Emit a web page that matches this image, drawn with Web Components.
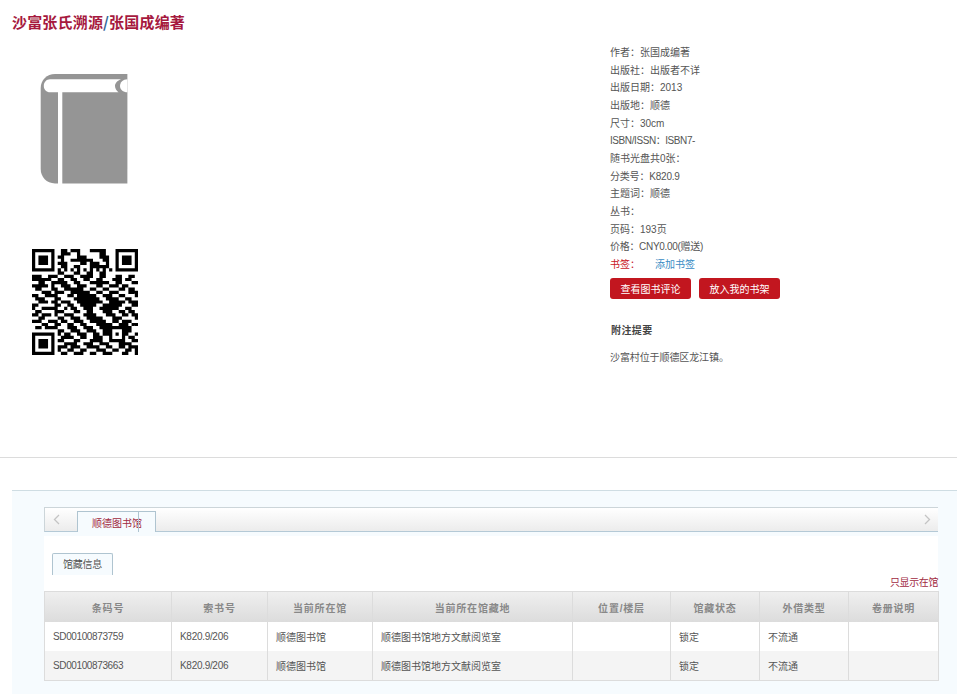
<!DOCTYPE html>
<html lang="zh">
<head>
<meta charset="utf-8">
<title>沙富张氏溯源</title>
<style>
html, body { margin: 0; padding: 0; background: #fff; overflow: hidden; }
body { font: 10px "Liberation Sans", "Noto Sans CJK SC", sans-serif; color: #555; }
</style>
</head>
<body>
<book-page>
  <book-title slot="title" name="沙富张氏溯源" author="张国成编著"></book-title>
  <book-cover slot="left"></book-cover>
  <qr-code slot="left"></qr-code>
  <book-meta slot="right"></book-meta>
  <holdings-panel slot="bottom"></holdings-panel>
</book-page>

<script>
// ---------------- page frame ----------------
class BookPage extends HTMLElement {
  constructor() {
    super();
    this.attachShadow({ mode: "open" });
    this.shadowRoot.innerHTML = `
    <style>
      :host { display: block; width: 957px; height: 694px; overflow: hidden; }
      .top { height: 457px; border-bottom: 1px solid #dcdcdc; box-sizing: content-box; }
      .cols { display: flex; }
      .left { width: 610px; flex: none; }
      .right { flex: 1; }
      .bottom { padding: 32px 0 0 12px; }
    </style>
    <div class="top">
      <slot name="title"></slot>
      <div class="cols">
        <div class="left"><slot name="left"></slot></div>
        <div class="right"><slot name="right"></slot></div>
      </div>
    </div>
    <div class="bottom"><slot name="bottom"></slot></div>`;
  }
}

class BookTitle extends HTMLElement {
  constructor() {
    super();
    this.attachShadow({ mode: "open" });
    this.shadowRoot.innerHTML = `
    <style>
      :host { display: block; height: 43px; padding: 13px 0 0 12px; box-sizing: border-box;
        font: bold 15px/18px "Noto Sans CJK SC", sans-serif; color: #a6193e; letter-spacing: .18px; }
      span { color: #336699; }
    </style>
    ${this.getAttribute("name")}<span>/</span>${this.getAttribute("author")}`;
  }
}

class BookCover extends HTMLElement {
  constructor() {
    super();
    this.attachShadow({ mode: "open" });
    this.shadowRoot.innerHTML = `
    <style>
      :host { display: block; height: 206px; padding: 31px 0 0 40px; box-sizing: border-box; }
      svg { display: block; }
    </style>
    <svg width="88" height="110" viewBox="0 0 88 110">
      <path fill="#959595" d="M15 0H87.4V109.4H15C6.5 109.4 .7 103 .7 95V14C.7 6 7 0 15 0Z"/>
      <path fill="#fff" d="M10 5.3H81C76.500 7 75 10 75 12C75 14.500 76.500 17 78.500 18.300H10C6.500 18.300 3.800 15.500 3.800 12C3.800 8.200 6.500 5.300 10 5.300Z"/>
      <path fill="#fff" d="M87.400 5.300C83 5.300 80 8.500 80 12C80 15.500 83 18.300 87.400 18.300Z"/>
      <path fill="#fff" d="M18 18H22.300V110H18Z"/>
    </svg>`;
  }
}

// ---------------- qr code ----------------
const qrRows = [
  "1111111001101110001111100001111111",
  "1000001001110010000001100001000001",
  "1011101011000011100001110001011101",
  "1011101001001111111000110001011101",
  "1011101011100001101110010001011101",
  "1000001001100110001111110001000001",
  "1111111010101010101010101001111111",
  "0000000011000110011001100000000000",
  "111001110011100111100110001100110",
  "111111001100110011001100011101100",
  "001100111110011000111111001100011",
  "111110100111001110001100111011000",
  "011000110011111100110011000110110",
  "000111011100111111001100111000111",
  "110011110001101111110011100110001",
  "011100011000011111111001111001100",
  "001110110111001111111100111110111",
  "110000011001100111110011111100011",
  "100111110010110011100111111001100",
  "011000011100011001100011100110110",
  "110111010011100011110001110011011",
  "001100001100111001111100011100001",
  "111001110110011100111110011011100",
  "000110011001100110001111100111011",
  "011011110001110011100111111111100",
  "000000001100111001110011100011100",
  "111111101011001110011011101011001",
  "100000100111100110011100100010110",
  "101110101100011000111100111110011",
  "101110100011110011100111000111100",
  "101110101110111001111001100110111",
  "100000101001100110001110011001101",
  "111111100110011100110011100011001"
];

class QrCode extends HTMLElement {
  constructor() {
    super();
    this.attachShadow({ mode: "open" });
    let d = "";
    qrRows.forEach((row, y) => {
      // top rows have a spare column in the middle, keep the right finder at the edge
      const cells = row.length > 33 ? row.slice(0, 26) + row.slice(27) : row;
      [...cells].forEach((cell, x) => {
        if (cell === "1") d += `M${x} ${y}h1v1h-1z`;
      });
    });
    this.shadowRoot.innerHTML = `
    <style>
      :host { display: block; padding-left: 32px; }
      svg { display: block; }
    </style>
    <svg width="106" height="106" viewBox="0 0 33 33"><path fill="#000" d="${d}"/></svg>`;
  }
}

// ---------------- right column ----------------
const metaLines = [
  ["作者：张国成编著"], ["出版社：出版者不详"], ["出版日期：2013"], ["出版地：顺德"], ["尺寸：30cm"],
  ["ISBN/ISSN：ISBN7-", -.42], ["随书光盘共0张："], ["分类号：K820.9", -.2], ["主题词：顺德"], ["丛书："],
  ["页码：193页"], ["价格：CNY0.00(赠送)", -.3]
];

class BookMeta extends HTMLElement {
  constructor() {
    super();
    this.attachShadow({ mode: "open" });
    this.shadowRoot.innerHTML = `
    <style>
      :host { display: block; padding-top: 1px; font: 10px/17.65px "Liberation Sans", "Noto Sans CJK SC", sans-serif; color: #555; }
      .tag { color: #c8171f; }
      .tag a { color: #3a8cc4; margin-left: 15px; text-decoration: none; }
      .btns { display: flex; gap: 8px; margin-top: 4px; }
      button-red { flex: none; }
      h4 { margin: 24px 0 0; font: bold 10px/14px "Noto Sans CJK SC", sans-serif; color: #444; letter-spacing: .4px; padding-left: 1px; }
      p { margin: 14px 0 0; line-height: 14px; letter-spacing: -.1px; }
    </style>
    ${metaLines.map(l => `<div style="letter-spacing:${l[1] || 0}px">${l[0]}</div>`).join("")}
    <div class="tag">书签：<a href="#">添加书签</a></div>
    <div class="btns"><button-red>查看图书评论</button-red><button-red>放入我的书架</button-red></div>
    <h4>附注提要</h4>
    <p>沙富村位于顺德区龙江镇。</p>`;
  }
}

class ButtonRed extends HTMLElement {
  constructor() {
    super();
    this.attachShadow({ mode: "open" });
    this.shadowRoot.innerHTML = `
    <style>
      :host { display: block; width: 81px; height: 21px; background: #c2161f; border-radius: 3px;
        color: #fff; font: 10px/21px "Noto Sans CJK SC", sans-serif; text-align: center; }
    </style>
    <slot></slot>`;
  }
}

// ---------------- holdings ----------------
class HoldingsPanel extends HTMLElement {
  constructor() {
    super();
    this.attachShadow({ mode: "open" });
    this.shadowRoot.innerHTML = `
    <style>
      :host { display: block; height: 204px; background: #f6fbfe; border-top: 1px solid #cfdde3;
        padding: 16px 0 0 32px; box-sizing: border-box; }
      .body { width: 894px; margin-top: 4px; background: #fff; padding-top: 17px; }
      .only { text-align: right; color: #a12a3f; font: 10px/16px "Noto Sans CJK SC", sans-serif; margin-top: -1px; letter-spacing: -.4px; padding-bottom: 1px; }
    </style>
    <tab-bar></tab-bar>
    <div class="body">
      <sub-tab>馆藏信息</sub-tab>
      <div class="only">只显示在馆</div>
      <holdings-table></holdings-table>
    </div>`;
  }
}

class TabBar extends HTMLElement {
  constructor() {
    super();
    this.attachShadow({ mode: "open" });
    this.shadowRoot.innerHTML = `
    <style>
      :host { display: flex; align-items: center; justify-content: space-between; position: relative;
        width: 894px; height: 25px; box-sizing: border-box; padding: 0 7px 0 8px;
        background: linear-gradient(#fff, #ececec); border: 1px solid #ccd5d9; border-bottom-color: #b4c9d6; border-right: 0; }
      svg { display: block; }
      .tab { position: absolute; left: 32px; top: 3px; width: 79px; height: 21px; box-sizing: border-box;
        border: 1px solid #afc4d0; border-bottom: 0; background: #f6fbfe; color: #a12a3f;
        font: 10px/21px "Noto Sans CJK SC", sans-serif; padding-left: 14px; }
      .tab i { position: absolute; left: 60px; top: 0; bottom: 0; width: 1px; background: #afc4d0; }
    </style>
    <svg width="7" height="11" viewBox="0 0 7 11"><path d="M6 1L1.500 5.500L6 10" fill="none" stroke="#c4c4c4" stroke-width="1.300"/></svg>
    <div class="tab">顺德图书馆<i></i></div>
    <svg width="7" height="11" viewBox="0 0 7 11"><path d="M1 1L5.500 5.500L1 10" fill="none" stroke="#c4c4c4" stroke-width="1.300"/></svg>`;
  }
}

class SubTab extends HTMLElement {
  constructor() {
    super();
    this.attachShadow({ mode: "open" });
    this.shadowRoot.innerHTML = `
    <style>
      :host { display: block; width: 61px; height: 22px; box-sizing: border-box; margin-left: 8px;
        border: 1px solid #afc4d0; border-bottom: 0; border-radius: 2px 2px 0 0; background: #f6fbfe;
        color: #555; font: 10px/20px "Noto Sans CJK SC", sans-serif; text-align: center; letter-spacing: -.3px; }
    </style>
    <slot></slot>`;
  }
}

const holdingHead = ["条码号", "索书号", "当前所在馆", "当前所在馆藏地", "位置/楼层", "馆藏状态", "外借类型", "卷册说明"];
const holdingRows = [
  ["SD00100873759", "K820.9/206", "顺德图书馆", "顺德图书馆地方文献阅览室", "", "锁定", "不流通", ""],
  ["SD00100873663", "K820.9/206", "顺德图书馆", "顺德图书馆地方文献阅览室", "", "锁定", "不流通", ""]
];
const holdingWidths = [127, 96, 105, 200, 98, 89, 89, 90];

class HoldingsTable extends HTMLElement {
  constructor() {
    super();
    this.attachShadow({ mode: "open" });
    const cols = holdingWidths.map(w => `<col style="width:${w}px">`).join("");
    const head = holdingHead.map(t => `<th>${t}</th>`).join("");
    const rows = holdingRows.map(r => `<tr>${r.map(t => `<td>${t}</td>`).join("")}</tr>`).join("");
    this.shadowRoot.innerHTML = `
    <style>
      :host { display: block; font: 10px "Liberation Sans", "Noto Sans CJK SC", sans-serif; color: #555; }
      table { border-collapse: separate; border-spacing: 0; table-layout: fixed; width: 894px; border-top: 1px solid #dcdcdc; border-left: 1px solid #dcdcdc; box-sizing: border-box; }
      th, td { border-right: 1px solid #dcdcdc; padding: 0 8px; }
      th { height: 30px; background: linear-gradient(#efefef, #dcdcdc); color: #888; font-weight: bold; letter-spacing: .8px; text-align: center; }
      td { height: 29px; background: #fff; text-align: left; }
      td:nth-child(1) { letter-spacing: -.38px; }
      td:nth-child(2) { letter-spacing: -.3px; }
      tr:nth-child(2) td { background: #f4f4f4; border-bottom: 1px solid #dcdcdc; }
    </style>
    <table><colgroup>${cols}</colgroup><thead><tr>${head}</tr></thead><tbody>${rows}</tbody></table>`;
  }
}

customElements.define("book-page", BookPage);
customElements.define("book-title", BookTitle);
customElements.define("book-cover", BookCover);
customElements.define("qr-code", QrCode);
customElements.define("book-meta", BookMeta);
customElements.define("button-red", ButtonRed);
customElements.define("holdings-panel", HoldingsPanel);
customElements.define("tab-bar", TabBar);
customElements.define("sub-tab", SubTab);
customElements.define("holdings-table", HoldingsTable);
</script>
</body>
</html>
